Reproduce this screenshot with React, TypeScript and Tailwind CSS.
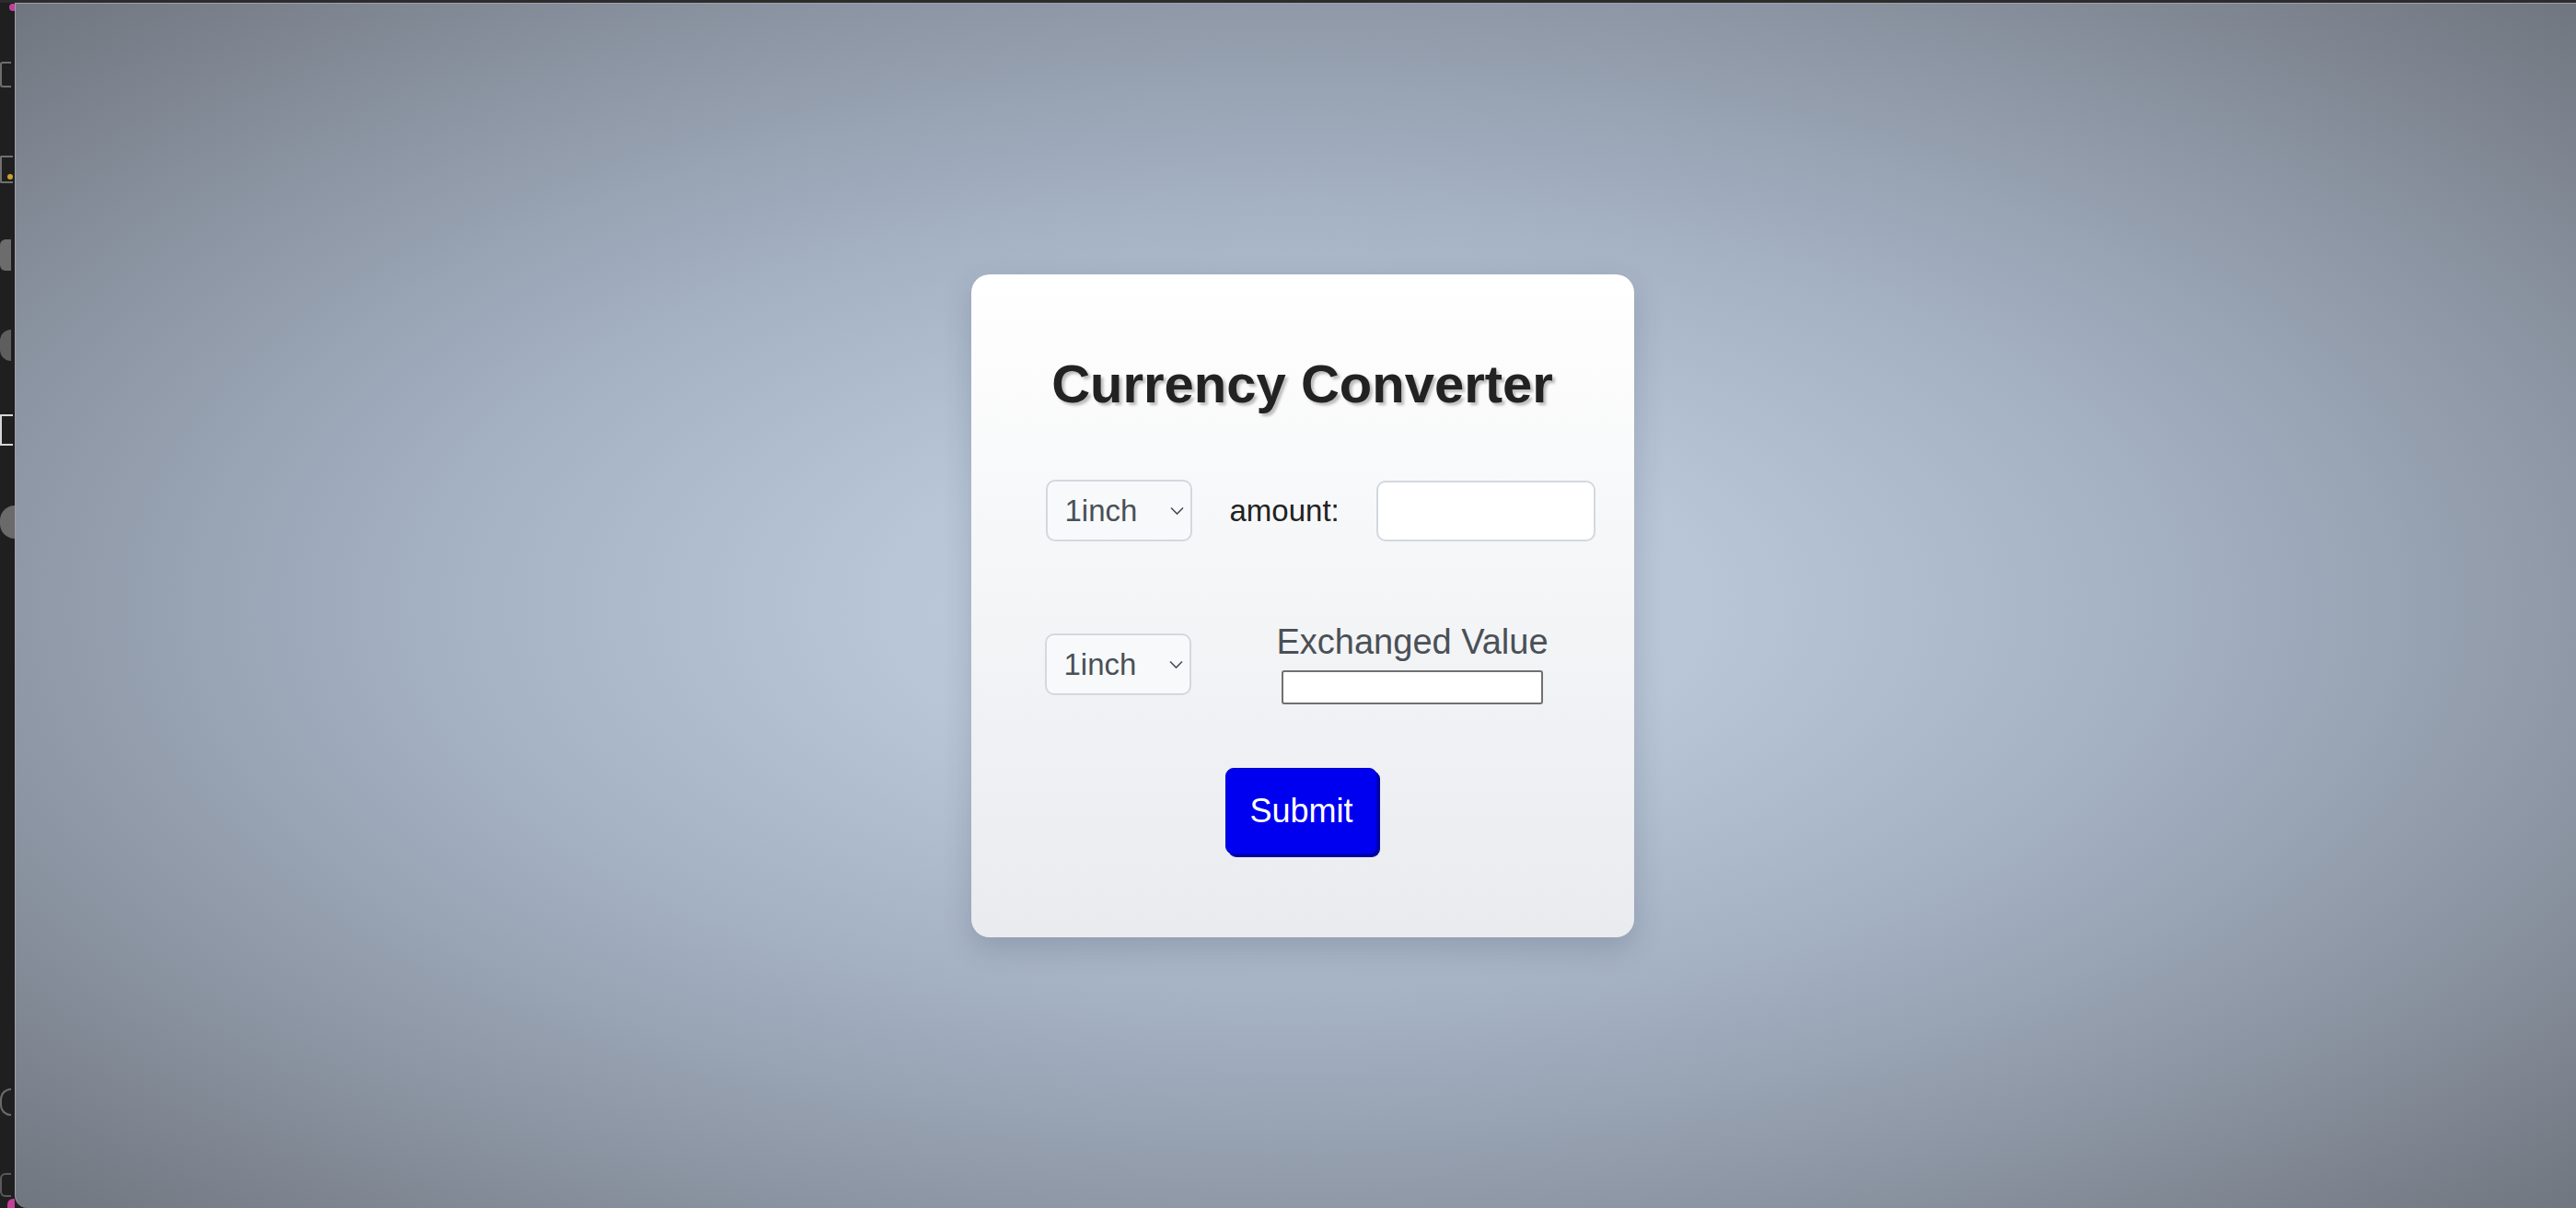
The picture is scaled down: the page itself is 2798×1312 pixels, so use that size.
import { useState } from "react";

const Chevron = () => (
    <svg
        className="pointer-events-none absolute right-[9px] top-1/2 -translate-y-1/2"
        width="15"
        height="9"
        viewBox="0 0 15 9"
        fill="none"
    >
        <path d="M1 1L7.5 7.5L14 1" stroke="#4a4f55" strokeWidth="1.6" />
    </svg>
);

const CoinSelect = ({ value, onChange }: { value: string; onChange: (v: string) => void }) => (
    <div className="relative w-[159px] h-[67px] shrink-0">
        <select
            value={value}
            onChange={(e) => onChange(e.target.value)}
            className="appearance-none w-full h-full border-2 border-[#d3d8de] rounded-[10px] bg-[#f8f9fa] pl-[19px] text-[33px] text-[#495057] outline-none"
        >
            <option value="1inch">1inch</option>
            <option value="aave">aave</option>
            <option value="bitcoin">bitcoin</option>
            <option value="ethereum">ethereum</option>
        </select>
        <Chevron />
    </div>
);

// bits of the desktop dock peeking out at the left edge
const DockStrip = () => (
    <div className="w-[16px] shrink-0 flex flex-col items-start overflow-hidden">
        <div className="w-[8px] h-[8px] rounded-full bg-[#c2409a] ml-[10px] mt-[1px]" />
        <div className="w-[12px] h-[28px] mt-[55px] border-l-2 border-t-2 border-b-2 border-[#6e6e6e] rounded-l-[3px]" />
        <div className="relative w-[14px] h-[30px] mt-[74px] border-2 border-r-0 border-[#707070] rounded-l-[2px]">
            <div className="absolute right-0 bottom-[2px] w-[6px] h-[6px] rounded-full bg-[#c9a227]" />
        </div>
        <div className="w-[12px] h-[34px] mt-[61px] rounded-l-[6px] bg-[#6c6c6c]" />
        <div className="w-[12px] h-[34px] mt-[64px] rounded-l-full bg-[#5e5e5e]" />
        <div className="w-[14px] h-[34px] mt-[58px] border-2 border-r-0 border-[#d6d6d6]" />
        <div className="w-[16px] h-[36px] mt-[65px] rounded-l-full bg-[#6a6a6a]" />
        <div className="flex-1" />
        <div className="w-[12px] h-[30px] border-2 border-r-0 border-[#6a6a6a] rounded-l-full" />
        <div className="w-[12px] h-[26px] mt-[62px] border-2 border-r-0 border-[#5a5a5a] rounded-l-[6px]" />
        <div className="w-[12px] h-[10px] mt-[2px] rounded-t-full bg-[#c2409a] ml-[8px]" />
    </div>
);

const App = () => {
    const [from, setFrom] = useState("1inch");
    const [to, setTo] = useState("1inch");
    const [amount, setAmount] = useState("");
    const [result, setResult] = useState("");

    return (
        <div className="w-[2798px] h-[1312px] bg-[#1f1f1f] flex flex-col overflow-hidden font-['Liberation_Sans',Arial,sans-serif]">
            <div className="h-[3px] shrink-0 bg-[#2c2c2c]" />
            <div className="flex flex-1 min-h-0">
                <DockStrip />
                <main className="flex-1 flex items-center justify-center pl-[14px] rounded-bl-[14px] border-l border-t border-[#9da1a8] bg-[radial-gradient(ellipse_at_center,#bfcde0_0%,#b8c6d8_22%,#a4b1c3_48%,#8c95a3_74%,#70767f_100%)]">
                    <div className="w-[720px] rounded-[20px] bg-gradient-to-b from-[#ffffff] to-[#e9ebef] shadow-[0_12px_32px_rgba(40,50,70,0.2)] pt-[90px] pb-[90px] flex flex-col">
                        <h1 className="text-center text-[58px] leading-none font-bold text-[#222222] [text-shadow:3px_3px_3px_rgba(0,0,0,0.25)]">
                            Currency Converter
                        </h1>

                        <div className="mt-[75px] pl-[81px] flex items-center h-[67px]">
                            <CoinSelect value={from} onChange={setFrom} />
                            <label className="ml-[41px] text-[33px] text-[#222222]">amount:</label>
                            <input
                                value={amount}
                                onChange={(e) => setAmount(e.target.value)}
                                className="ml-[40px] w-[238px] h-[66px] border-2 border-[#d3d8de] rounded-[10px] bg-white px-3 text-[30px] outline-none"
                            />
                        </div>

                        <div className="mt-[90px] pl-[80px] flex items-center">
                            <CoinSelect value={to} onChange={setTo} />
                            <div className="ml-[93px] flex flex-col items-center">
                                <span className="text-[38px] leading-none text-[#4a5056]">Exchanged Value</span>
                                <input
                                    value={result}
                                    readOnly
                                    className="mt-[12px] w-[284px] h-[37px] border-2 border-[#707070] rounded-[3px] bg-white px-2 text-[22px] outline-none"
                                />
                            </div>
                        </div>

                        <div className="mt-[69px] flex justify-center pr-[2px]">
                            <button
                                onClick={() => setResult(amount)}
                                className="w-[165px] h-[94px] rounded-[9px] bg-[#0000f0] border border-[#0000c4] shadow-[3px_3px_0_#0000a6] text-white text-[36px]"
                            >
                                Submit
                            </button>
                        </div>
                    </div>
                </main>
            </div>
        </div>
    );
};

export default App;
